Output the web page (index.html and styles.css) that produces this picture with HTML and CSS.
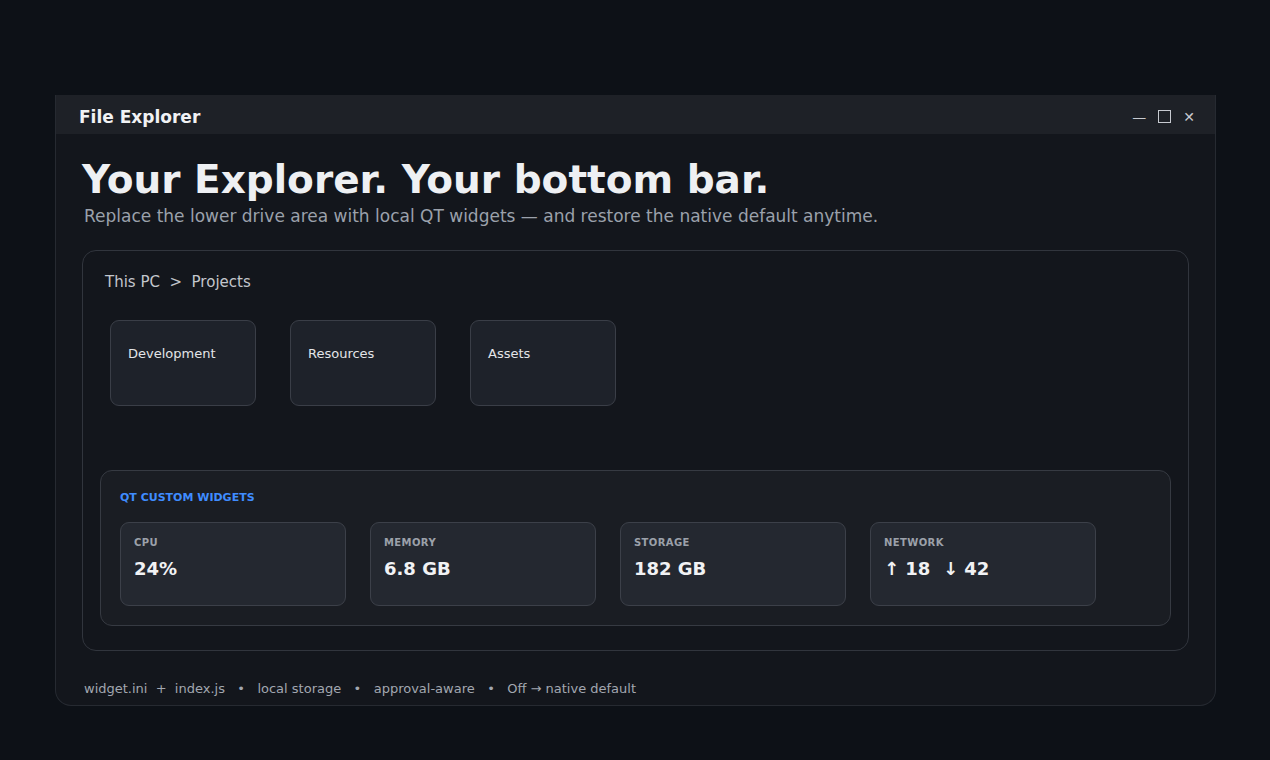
FILE: index.html
```html
<!DOCTYPE html>
<html lang="en">
<head>
    <meta charset="UTF-8">
    <meta name="viewport" content="width=device-width, initial-scale=1.0">
    <title>File Explorer</title>
    <link rel="stylesheet" href="styles.css">
</head>
<body>
    <div class="window">
        <div class="titlebar">
            <span class="title">File Explorer</span>
            <div class="controls">
                <span class="ctl">—</span>
                <span class="ctl box"></span>
                <span class="ctl">✕</span>
            </div>
        </div>

        <div class="content">
            <h1>Your Explorer. Your bottom bar.</h1>
            <p class="lead">Replace the lower drive area with local QT widgets — and restore the native default anytime.</p>

            <div class="explorer">
                <div class="crumbs">This PC &nbsp;&gt;&nbsp; Projects</div>

                <div class="folders">
                    <div class="folder">Development</div>
                    <div class="folder">Resources</div>
                    <div class="folder">Assets</div>
                </div>

                <div class="widgets">
                    <div class="widgets-title">QT CUSTOM WIDGETS</div>
                    <div class="widget-row">
                        <div class="widget">
                            <div class="label">CPU</div>
                            <div class="value">24%</div>
                        </div>
                        <div class="widget">
                            <div class="label">MEMORY</div>
                            <div class="value">6.8 GB</div>
                        </div>
                        <div class="widget">
                            <div class="label">STORAGE</div>
                            <div class="value">182 GB</div>
                        </div>
                        <div class="widget">
                            <div class="label">NETWORK</div>
                            <div class="value">↑ 18 &nbsp;↓ 42</div>
                        </div>
                    </div>
                </div>
            </div>

            <div class="footer">widget.ini &nbsp;+&nbsp; index.js &nbsp; • &nbsp; local storage &nbsp; • &nbsp; approval-aware &nbsp; • &nbsp; Off → native default</div>
        </div>
    </div>
</body>
</html>
```

FILE: styles.css
```css
body {
    margin: 0;
    background: #0d1117;
    font-family: "DejaVu Sans", sans-serif;
    color: #e6e8ec;
}
.window {
    width: 1161px;
    margin: 95px 0 0 55px;
    height: 611px;
    box-sizing: border-box;
    background: #13161c;
    border: 1px solid #262a31;
    border-top: none;
    border-radius: 0 0 16px 16px;
}
.titlebar {
    height: 39px;
    box-sizing: border-box;
    padding: 4px 20px 0 23px;
    background: #1e2127;
    display: flex;
    align-items: center;
    justify-content: space-between;
}
.title {
    font-weight: bold;
    font-size: 17px;
    color: #f1f2f4;
}
.controls {
    display: flex;
    align-items: center;
    gap: 12px;
    color: #c7cad0;
    font-size: 14px;
}
.ctl.box {
    width: 11px;
    height: 11px;
    border: 1px solid #c7cad0;
}
.content {
    padding: 22px 26px 0 26px;
}
h1 {
    margin: 0;
    font-size: 39px;
    line-height: 48px;
    color: #eef0f3;
}
.lead {
    margin: 0 0 0 2px;
    font-size: 17px;
    color: #9ba1ab;
    line-height: 24px;
}
.explorer {
    margin-top: 22px;
    height: 401px;
    box-sizing: border-box;
    border: 1px solid #31353d;
    border-radius: 14px;
    padding: 22px 17px 0 17px;
}
.crumbs {
    margin-left: 5px;
    font-size: 15px;
    color: #c3c6cc;
}
.folders {
    display: flex;
    gap: 34px;
    margin: 29px 0 0 10px;
}
.folder {
    width: 146px;
    height: 86px;
    box-sizing: border-box;
    background: #1e222a;
    border: 1px solid #3a3e47;
    border-radius: 9px;
    padding: 25px 17px;
    font-size: 13px;
    color: #e3e5e8;
}
.widgets {
    margin-top: 64px;
    height: 156px;
    box-sizing: border-box;
    background: #1a1d23;
    border: 1px solid #363a42;
    border-radius: 12px;
    padding: 20px 19px;
}
.widgets-title {
    font-size: 11px;
    font-weight: bold;
    color: #3f8cff;
}
.widget-row {
    display: flex;
    gap: 24px;
    margin-top: 18px;
}
.widget {
    width: 226px;
    height: 84px;
    box-sizing: border-box;
    background: #242830;
    border: 1px solid #3c4049;
    border-radius: 9px;
    padding: 14px 13px;
}
.label {
    font-size: 10px;
    font-weight: bold;
    color: #9ca1aa;
    letter-spacing: 0.4px;
}
.value {
    margin-top: 10px;
    font-size: 18px;
    font-weight: bold;
    color: #f1f2f4;
}
.footer {
    margin: 30px 0 0 2px;
    font-size: 13px;
    color: #a2a7b0;
}
```
